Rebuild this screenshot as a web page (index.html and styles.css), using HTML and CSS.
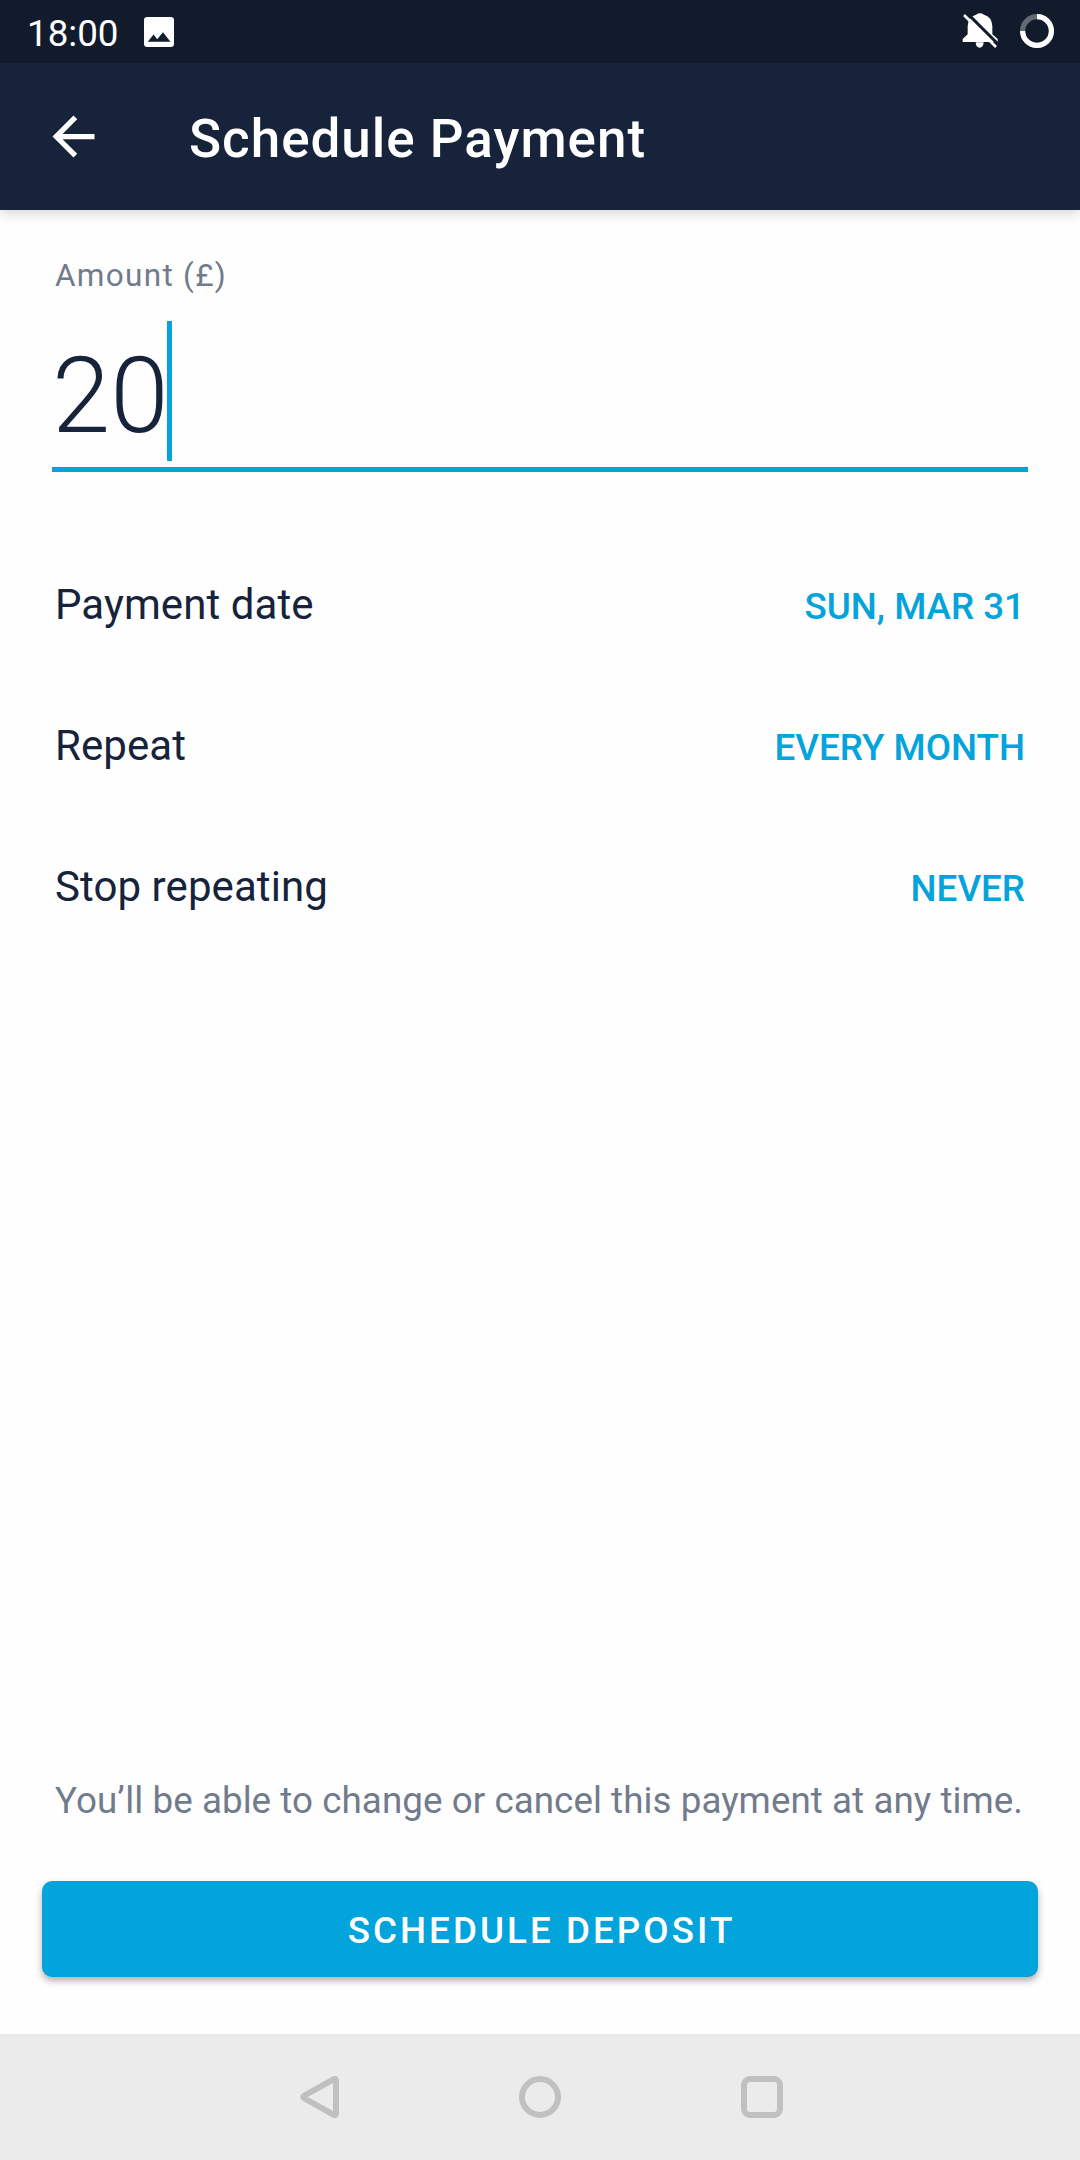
FILE: index.html
```html
<!DOCTYPE html>
<html lang="en">
<head>
<meta charset="utf-8">
<title>Schedule Payment</title>
<link rel="stylesheet" href="styles.css">
</head>
<body>
<div class="screen">
  <div class="status-bar">
    <span class="clock">18:00</span>
    <svg class="icon-image" viewBox="0 0 30 30"><path fill="#fff" fill-rule="evenodd" d="M3.2 0H26.8Q30 0 30 3.2V26.8Q30 30 26.8 30H3.2Q0 30 0 26.8V3.2Q0 0 3.2 0ZM3.8 24.7H26.4L19 15.2L13.2 22.2L9.6 17.6Z"/></svg>
    <svg class="icon-bell" viewBox="180 30 120 120">
      <path fill="#fff" d="M188 126V117L203 103V78Q205 50 228 44Q240 36 252 44Q275 50 277 78V103L293 117V126ZM227 127H251Q250 143 239 143Q228 143 227 127Z"/>
      <path stroke="#111b2b" stroke-width="9" d="M196 34L300 138"/>
      <path stroke="#fff" stroke-width="8" d="M192 45L288 141"/>
    </svg>
    <svg class="icon-ring" viewBox="0 0 34 34" fill="none" stroke-width="5.2">
      <circle cx="17" cy="17" r="14.4" stroke="#626a75"/>
      <path stroke="#fff" d="M17 2.6A14.4 14.4 0 1 1 2.6 17"/>
    </svg>
  </div>
  <header class="app-bar">
    <svg class="icon-back" viewBox="0 0 24 24"><path fill="#fff" d="M20 11H7.83l5.59-5.59L12 4l-8 8 8 8 1.41-1.41L7.83 13H20v-2z"/></svg>
    <h1 class="title">Schedule Payment</h1>
  </header>
  <main class="content">
    <div class="label">Amount (£)</div>
    <div class="field"><span class="amount">20</span><span class="cursor"></span></div>
    <div class="rows">
      <div class="row"><span class="name">Payment date</span><span class="value">SUN, MAR 31</span></div>
      <div class="row"><span class="name">Repeat</span><span class="value">EVERY MONTH</span></div>
      <div class="row"><span class="name">Stop repeating</span><span class="value">NEVER</span></div>
    </div>
    <p class="note">You’ll be able to change or cancel this payment at any time.</p>
    <button class="submit">SCHEDULE DEPOSIT</button>
  </main>
  <nav class="nav-bar">
    <svg class="nav-icon" viewBox="0 0 42 42"><path d="M39 5V37.500Q39 40 36.500 38.700L7.500 22.500Q5 21 7.500 19.500L36.500 3.300Q39 2 39 5Z"/></svg>
    <svg class="nav-icon" viewBox="0 0 42 42"><circle cx="21" cy="21" r="18"/></svg>
    <svg class="nav-icon" viewBox="0 0 42 42"><rect x="3" y="3" width="36" height="36" rx="6"/></svg>
  </nav>
</div>
</body>
</html>
```
FILE: styles.css
```css
* {
  box-sizing: border-box;
}

body {
  margin: 0;
  background: #fefefe;
  font-family: Roboto, sans-serif;
}

.screen {
  width: 1080px;
  height: 2160px;
  display: flex;
  flex-direction: column;
}

.status-bar {
  position: relative;
  z-index: 1;
  height: 63px;
  flex: none;
  display: flex;
  align-items: flex-start;
  background: #111b2b;
}

.clock {
  margin-left: 27px;
  width: 117px;
  line-height: 67px;
  font-size: 36.75px;
  color: #fff;
}

.icon-image {
  width: 30px;
  height: 30px;
  margin-top: 16.5px;
}

.icon-bell {
  width: 40px;
  height: 40px;
  margin: 10px 20px 0 auto;
}

.icon-ring {
  width: 34px;
  height: 34px;
  margin: 14px 26px 0 0;
}

.app-bar {
  height: 147px;
  flex: none;
  display: flex;
  align-items: center;
  background: #16233b;
  box-shadow: 0 3px 12px rgba(0, 0, 0, 0.17);
}

.icon-back {
  width: 63px;
  height: 63px;
  margin-left: 42px;
}

.title {
  margin: 0 0 0 84px;
  padding-top: 4px;
  font-size: 53px;
  font-weight: 500;
  letter-spacing: 0.98px;
  line-height: 60px;
  color: #fff;
}

.content {
  flex: 1;
  display: flex;
  flex-direction: column;
  padding: 46px 42px 57px;
}

.label {
  margin-left: 13px;
  font-size: 31.5px;
  line-height: 40px;
  letter-spacing: 1.3px;
  color: #717b8c;
}

.field {
  display: flex;
  margin: 25px 10px 0;
  height: 151px;
  border-bottom: 5px solid #03a3db;
}

.amount {
  width: 115px;
  font-size: 105px;
  font-weight: 300;
  line-height: 152px;
  color: #16233b;
}

.cursor {
  width: 5px;
  height: 140px;
  background: #03a3db;
}

.rows {
  margin: 62px 13px 0;
}

.row {
  height: 141px;
  display: flex;
  justify-content: space-between;
  align-items: baseline;
  line-height: 141px;
}

.name {
  font-size: 42px;
  letter-spacing: 0.08px;
  color: #16233b;
}

.value {
  font-size: 36.75px;
  font-weight: 500;
  color: #03a3db;
}

.note {
  margin: auto 0 0 13px;
  font-size: 36.75px;
  line-height: 44px;
  letter-spacing: 0.06px;
  white-space: nowrap;
  color: #717b8c;
}

.submit {
  flex: none;
  height: 96px;
  margin-top: 58px;
  padding: 2px 0 0 3px;
  border: 0;
  border-radius: 10px;
  background: #03a3db;
  box-shadow: 0 4px 7px rgba(0, 0, 0, 0.3);
  font: 500 36.75px Roboto, sans-serif;
  letter-spacing: 3.05px;
  color: #fff;
}

.nav-bar {
  height: 126px;
  flex: none;
  display: flex;
  justify-content: center;
  align-items: center;
  gap: 180px;
  background: #ebebeb;
}

.nav-icon {
  width: 42px;
  height: 42px;
  fill: none;
  stroke: #c0c0c0;
  stroke-width: 6;
  stroke-linejoin: round;
}
```
